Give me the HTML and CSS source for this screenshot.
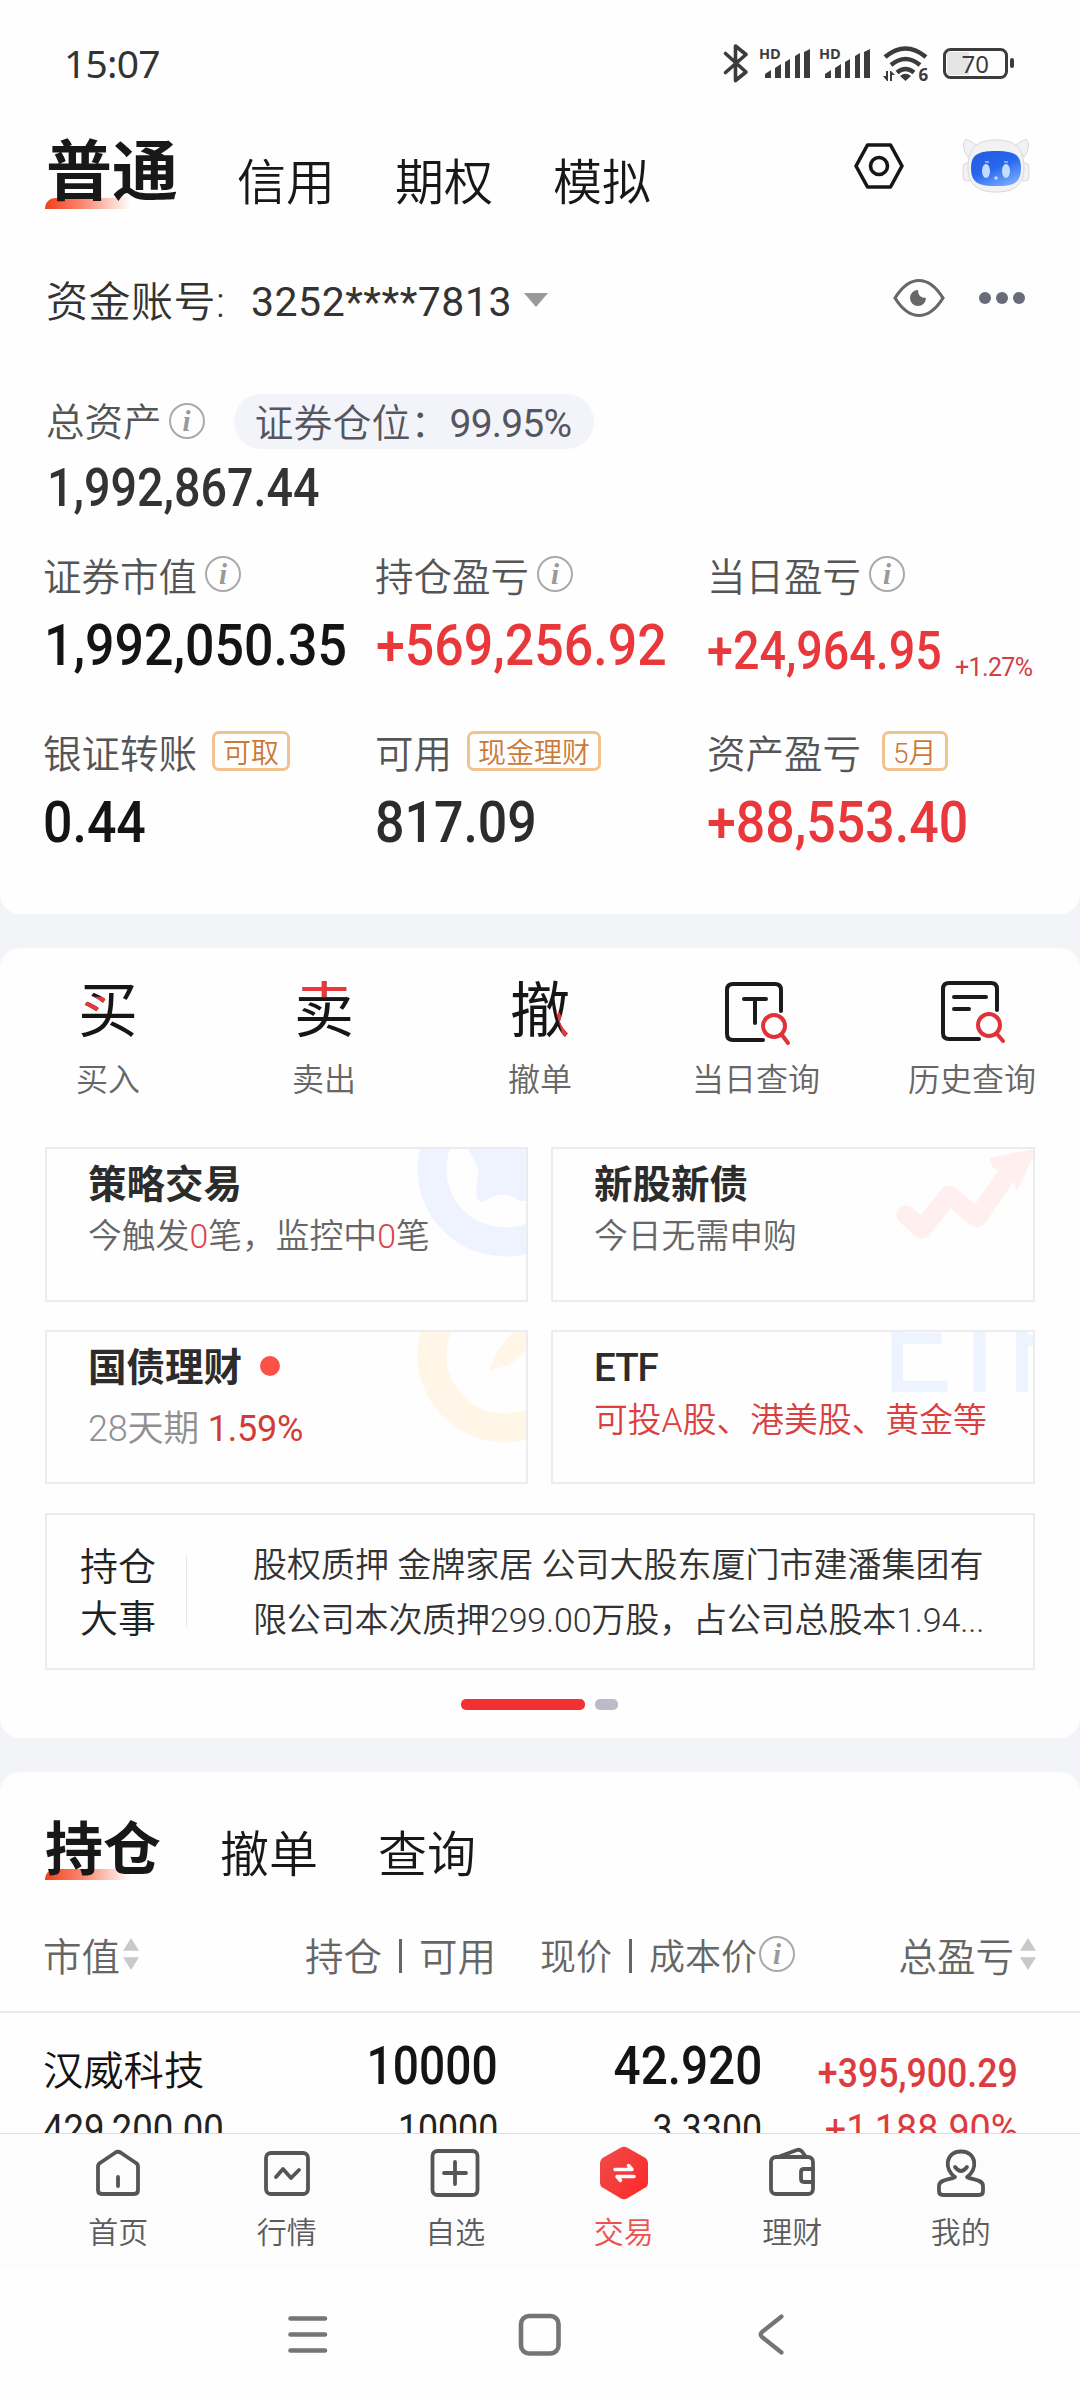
FILE: index.html
```html
<!DOCTYPE html>
<html lang="zh-CN">
<head>
<meta charset="utf-8">
<title>交易</title>
<link rel="stylesheet" href="styles.css">
</head>
<body>
<div class="phone">
  <section class="panel account">
    <header class="status">
      <span class="clock">15:07</span>
      <svg class="status-icons" width="300" height="44" viewBox="720 42 300 44" fill="none" stroke="#3c3c3c">
        <path d="M725.500 53.500L746 72L735.500 80.500V46L746 54.500L725.500 72.500" stroke-width="3.600" stroke-linejoin="round" stroke-linecap="round"/>
        <g fill="#3c3c3c" stroke="none">
          <text x="759" y="58.500" class="hd">HD</text>
          <path d="M765 78v-4l6-4v8zM775 78v-10l6-4v14zM785 78v-16l5-3v19zM795 78v-22l5-3v25zM804 78v-26l6-3v29z"/>
          <text x="819" y="58.500" class="hd">HD</text>
          <path d="M825 78v-4l6-4v8zM835 78v-10l6-4v14zM845 78v-16l5-3v19zM855 78v-22l5-3v25zM864 78v-26l6-3v29z"/>
          <path d="M900 76q5.500-4.500 11 0l-5.500 5zM883 76h3v-5h2v10h-1zM890 81v-10h1l4 4h-3v6z"/>
          <text x="918.500" y="81" class="six">6</text>
          <rect x="947" y="52" width="22" height="23" fill="#e4e4e4"/>
          <text x="961.500" y="73" class="battery">70</text>
          <rect x="1010" y="58" width="4" height="10" rx="2"/>
        </g>
        <path d="M885 57Q905.500 40 926 57M891 65Q905.500 53 920 65M897 72.500Q905.500 65.500 914 72.500" stroke-width="4.500"/>
        <rect x="944.500" y="49.500" width="62" height="28" rx="6" stroke-width="3"/>
      </svg>
    </header>
    <nav class="tabs main-tabs">
      <span class="tab active">普通</span><span class="tab">信用</span><span class="tab">期权</span><span class="tab">模拟</span>
      <svg class="hex" width="50" height="48" viewBox="0 0 50 48" fill="none" stroke="#161616" stroke-width="3.600" stroke-linejoin="round"><path d="M13.500 3H36.500L48 24L36.500 45H13.500L2 24Z"/><circle cx="25" cy="24" r="8.500"/></svg>
      <svg class="robot" width="72" height="58" viewBox="0 0 72 58">
        <defs>
          <linearGradient id="face" x1="0" y1="0" x2=".6" y2="1"><stop offset="0" stop-color="#245bdd"/><stop offset=".55" stop-color="#2767ee"/><stop offset="1" stop-color="#6fa2fb"/></linearGradient>
        </defs>
        <g fill="#f2f2f5" stroke="#d8d8de" stroke-width="1"><path d="M8 20Q0 9 6 2Q10 4 18 9ZM64 20Q72 9 66 2Q62 4 54 9Z"/><rect x="3" y="26" width="9" height="18" rx="4"/><rect x="60" y="26" width="9" height="18" rx="4"/><path d="M36 3C54 3 64 10 64 31C64 49 53 55 36 55C19 55 8 49 8 31C8 10 18 3 36 3Z"/></g>
        <path d="M36 14C53 14 61 17 61 31C61 47 52 49 36 49C20 49 11 47 11 31C11 17 19 14 36 14Z" fill="url(#face)"/>
        <g fill="#c3dcff"><ellipse cx="26" cy="34" rx="4" ry="7"/><ellipse cx="46" cy="34" rx="4" ry="7"/><circle cx="36" cy="41" r="1.700"/></g>
        <path d="M25 25h4M44 25h4" stroke="#7fabff" stroke-width="2"/>
      </svg>
    </nav>
    <div class="account-row">
      <span class="account-label">资金账号:</span><span class="account-no">3252****7813</span><i class="caret"></i>
      <svg class="eye" width="52" height="40" viewBox="0 0 52 40"><path d="M2 20Q13 2.500 26 2.500T50 20Q39 37.500 26 37.500T2 20Z" fill="none" stroke="#686868" stroke-width="3.200"/><path d="M25 12A8 8 0 1 0 33 20Q25 20 25 12Z" fill="#686868"/></svg>
      <span class="dots"><i></i><i></i><i></i></span>
    </div>
    <div class="total-row"><span class="label">总资产</span><i class="info">i</i><span class="pill"><span class="pos">证券仓位：</span><span class="pct">99.95%</span></span></div>
    <div class="total-value"><span class="num total">1,992,867.44</span></div>
    <div class="grid3 labels first"><div>证券市值<i class="info">i</i></div><div>持仓盈亏<i class="info">i</i></div><div>当日盈亏<i class="info">i</i></div></div>
    <div class="grid3 values"><div><span class="num big">1,992,050.35</span></div><div><span class="num big red">+569,256.92</span></div><div><span class="num day red">+24,964.95</span><span class="rate">+1.27%</span></div></div>
    <div class="grid3 labels second"><div>银证转账<b class="tag">可取</b></div><div>可用<b class="tag">现金理财</b></div><div>资产盈亏<b class="tag month">5月</b></div></div>
    <div class="grid3 values"><div><span class="num big">0.44</span></div><div><span class="num big soft">817.09</span></div><div><span class="num big red">+88,553.40</span></div></div>
  </section>

  <section class="panel tools">
    <div class="quick">
      <div><span class="glyph buy" data-char="买">买</span><span>买入</span></div>
      <div><span class="glyph sell" data-char="卖">卖</span><span>卖出</span></div>
      <div><span class="glyph cancel" data-char="撤">撤</span><span>撤单</span></div>
      <div><svg width="68" height="66" viewBox="0 0 68 66" fill="none" stroke="#1b1b1b" stroke-width="4" stroke-linecap="round" stroke-linejoin="round"><path d="M41 60H11Q5 60 5 54V10Q5 4 11 4H53Q59 4 59 10V31M22 19H44M33 19V43"/><g stroke="#dd3339"><circle cx="52" cy="46" r="11"/><path d="M60 55L66 63"/></g></svg><span>当日查询</span></div>
      <div><svg width="68" height="66" viewBox="0 0 68 66" fill="none" stroke="#1b1b1b" stroke-width="4" stroke-linecap="round" stroke-linejoin="round"><path d="M41 59H11Q5 59 5 53V9Q5 3 11 3H53Q59 3 59 9V30M16 17H48M16 29H31"/><g stroke="#dd3339"><circle cx="51" cy="45" r="11"/><path d="M59 54L65 61"/></g></svg><span>历史查询</span></div>
    </div>
    <div class="cards">
      <article>
        <svg class="art" width="110" height="153" viewBox="418 1148 110 153"><circle cx="507" cy="1168" r="73" fill="none" stroke="#eff2ff" stroke-width="29"/><path d="M470 1148L481 1169Q477 1184 479 1197Q483 1204 490 1198Q507 1188 522 1200L528 1200V1148Z" fill="#eff2ff"/></svg>
        <h3>策略交易</h3><p>今触发<em>0</em>笔，监控中<em>0</em>笔</p>
      </article>
      <article>
        <svg class="art" width="140" height="153" viewBox="894 1148 140 153" fill="#ffefef"><path d="M907 1214L923 1228L950 1194L978 1217L1016 1162" fill="none" stroke="#ffefef" stroke-width="19" stroke-linejoin="round" stroke-linecap="round"/><path d="M990 1157L1034 1148V1156L1018 1190L1012 1173L994 1167Z"/></svg>
        <h3>新股新债</h3><p>今日无需申购</p>
      </article>
      <article class="bond">
        <svg class="art" width="110" height="152" viewBox="418 1331 110 152"><circle cx="507" cy="1354" r="73" fill="none" stroke="#fff6e8" stroke-width="29"/><path d="M528 1331H515L499 1350L491 1370L511 1364L528 1350Z" fill="#fff6e8"/></svg>
        <h3>国债理财<i class="dot"></i></h3><p>28天期 <em>1.59%</em></p>
      </article>
      <article class="etf">
        <span class="art etf-mark">ETF</span>
        <h3>ETF</h3><p>可投A股、港美股、黄金等</p>
      </article>
    </div>
    <div class="news"><div class="news-title">持仓<br>大事</div><div class="news-text">股权质押 金牌家居 公司大股东厦门市建潘集团有<br><span class="line2">限公司本次质押299.00万股，占公司总股本1.94...</span></div></div>
    <div class="pager"><i></i><i></i></div>
  </section>

  <section class="panel holdings">
    <nav class="tabs hold-tabs"><span class="tab active">持仓</span><span class="tab">撤单</span><span class="tab">查询</span></nav>
    <div class="table-head">
      <div>市值<i class="sorter"></i></div>
      <div class="right">持仓<s></s>可用</div>
      <div class="cost">现价<s></s>成本价<i class="info">i</i></div>
      <div class="right last">总盈亏<i class="sorter"></i></div>
    </div>
    <div class="row row-main"><span class="name">汉威科技</span><span class="num r">10000</span><span class="num r price">42.920</span><span class="num r gain">+395,900.29</span></div>
    <div class="row row-sub"><span class="num">429,200.00</span><span class="num r">10000</span><span class="num r">3.3300</span><span class="num r gain">+1,188.90%</span></div>
  </section>

  <nav class="bottom">
    <div><svg width="56" height="56" viewBox="0 0 56 56"><path d="M8 22Q8 19 10 18L25.500 7.500Q28 6 30.500 7.500L46 18Q48 19 48 22V45Q48 49 44 49H12Q8 49 8 45ZM28 32V41"/></svg><span>首页</span></div>
    <div><svg width="56" height="56" viewBox="0 0 56 56"><rect x="7" y="8" width="42" height="41" rx="5"/><path d="M17 32L24 24L32 33L40 25"/></svg><span>行情</span></div>
    <div><svg width="56" height="56" viewBox="0 0 56 56"><rect x="5.500" y="6" width="45" height="44" rx="5"/><path d="M17 28H39M28 17V39"/></svg><span>自选</span></div>
    <div class="current"><svg width="56" height="56" viewBox="0 0 56 56"><defs><linearGradient id="hexfill" x1="0" y1="0" x2="1" y2=".7"><stop offset="0" stop-color="#ed4d4b"/><stop offset="1" stop-color="#fb2c2c"/></linearGradient></defs><path d="M25 2.500Q28 1 31 2.500L49.500 13Q52 15 52 18V38Q52 41 49.500 42.500L31 53.500Q28 55 25 53.500L6.500 42.500Q4 41 4 38V18Q4 15 6.500 13Z" fill="url(#hexfill)" stroke="none"/><path d="M19 24.500H36L32.500 20.500M38 31.500H21L24.500 35.500" stroke="#fff" stroke-width="3.500"/></svg><span>交易</span></div>
    <div><svg width="56" height="56" viewBox="0 0 56 56"><rect x="7" y="12" width="42" height="37" rx="5"/><path d="M49 24H40Q37 24 37 27V34Q37 37 40 37H49M14 12L33 5Q36 4 38 6.500L42 12"/></svg><span>理财</span></div>
    <div><svg width="56" height="56" viewBox="0 0 56 56"><path d="M22 32C11 25 12 6.500 28 6.500S45 25 34 32C39 35 50 34 50 41V46Q50 50 46 50H10Q6 50 6 46V41C6 34 17 35 22 32M22 22Q28 30 34 22"/></svg><span>我的</span></div>
  </nav>
  <footer class="system">
    <svg width="500" height="46" viewBox="286 2310 500 46" fill="none" stroke="#757575" stroke-linecap="round" stroke-linejoin="round"><path d="M290.500 2317.500H325M290.500 2333.500H325M290.500 2349.500H325" stroke-width="4.600"/><rect x="521" y="2315" width="37.500" height="37.500" rx="8" stroke-width="4.600"/><path d="M781.500 2315.500L762 2331Q759.500 2333.500 762 2336L781.500 2351.500" stroke-width="4.200"/></svg>
  </footer>
</div>
</body>
</html>
```
FILE: styles.css
```css
* { box-sizing: border-box; }
body { margin: 0; background: #f2f4f8; font-family: Roboto, "Noto Sans CJK SC", sans-serif; font-weight: 350; color: #1a1a1a; }
i, em { font-style: normal; }
.phone { width: 1080px; height: 2400px; display: flex; flex-direction: column; overflow: hidden; }
.panel { background: #fefefe; border-radius: 20px; overflow: hidden; flex: none; }
.account { height: 914px; border-radius: 0 0 20px 20px; }
.tools { height: 790px; margin-top: 34px; padding-top: 32px; }
.holdings { height: 361px; margin-top: 34px; border-radius: 20px 20px 0 0; }

/* status bar */
.status { height: 127px; padding: 0 60px 0 64px; display: flex; align-items: center; justify-content: space-between; }
.clock { font: 400 39px/48px "Noto Sans", Roboto, sans-serif; color: #333; letter-spacing: -.8px; margin-top: -2px; }
.hd { font: 700 14.500px "Open Sans", sans-serif; }
.six { font: 700 17px "Open Sans", sans-serif; }
.battery { font: 400 24px "Noto Sans", sans-serif; }

/* tab strips */
.tabs { display: flex; align-items: center; padding-left: 45px; position: relative; z-index: 0; }
.tab { font-size: 49px; line-height: 60px; margin-right: 60px; color: #181818; }
.tab.active { position: relative; font-weight: 700; }
.tab.active::before { content: ""; position: absolute; z-index: -1; left: 0; bottom: 2px; width: 86px; height: 11px; border-radius: 10px 0 0 0; background: linear-gradient(90deg, #f33f1b, #fa8a72 45%, #fff 100%); }
.main-tabs { height: 86px; }
.main-tabs .tab { margin-top: 28px; }
.main-tabs .active { font-size: 66px; line-height: 76px; margin-top: 5px; padding-left: 1px; margin-right: 59px; }
.hex { margin: -9px 0 0 auto; }
.robot { margin: -9px 48px 0 56px; }
.hold-tabs { height: 152px; }
.hold-tabs .tab { margin-top: 15px; }
.hold-tabs .active { font-size: 58px; line-height: 64px; margin-top: 3px; margin-right: 59px; }

/* account */
.account-row { height: 174px; padding: 0 55px 0 46px; display: flex; align-items: center; color: #333; }
.account-label { width: 205px; font-size: 42px; letter-spacing: .5px; margin-top: -4px; }
.account-no { font-size: 41px; font-weight: 400; letter-spacing: .5px; margin-top: 4px; }
.caret { border: 12px solid transparent; border-top: 14px solid #999; border-bottom: 0; margin-left: 12px; }
.eye { margin-left: auto; margin-top: -4px; }
.dots { display: flex; gap: 5px; margin: -4px 0 0 34px; }
.dots i { width: 12px; height: 12px; border-radius: 50%; background: #686b78; }
.label, .labels { font-size: 38.500px; color: #555; }
.label { margin-top: -4px; }
.info { width: 36px; height: 36px; border: 2px solid #aaa; border-radius: 50%; margin-left: 7px; display: inline-flex; align-items: center; justify-content: center; font: italic 700 29px/30px "Liberation Serif", serif; color: #999; flex: none; }
.total-row { height: 68px; padding-left: 46px; display: flex; align-items: center; }
.pill { margin-left: 29px; height: 55px; width: 360px; padding-left: 21px; border-radius: 28px; background: #f3f4f9; display: flex; align-items: center; font-size: 39px; color: #555660; }
.pos { margin-top: -2px; }
.pct { font-weight: 400; letter-spacing: -.8px; margin-top: 5px; }
.total-value { height: 62px; padding: 3px 0 0 47px; display: flex; align-items: center; }
.grid3 { display: grid; grid-template-columns: 332px 332px 1fr; padding-left: 43px; }
.grid3 > div { display: flex; align-items: center; }
.labels { height: 46px; }
.first { margin-top: 29px; }
.first .info { margin-left: 8px; }
.second { margin-top: 32px; }
.values { height: 91px; margin-top: 8px; }
.num { display: inline-block; transform: scaleX(.91); transform-origin: left; white-space: nowrap; }
.total { font-size: 53px; font-weight: 500; color: #333; transform: scaleX(.88); }
.big { font-size: 57px; font-weight: 500; color: #141414; }
.first + .values .big { margin-left: 1px; }
.soft { color: #2c2c2c; }
.day { font-size: 53px; font-weight: 500; transform: scaleX(.88); margin: 10px -25px 0 0; }
.num.red { color: #e8383b; }
.rate { font-size: 25px; font-weight: 400; color: #d24045; margin: 43px 0 0 6px; letter-spacing: -.6px; }
.tag { height: 40px; margin-left: 15px; padding: 0 8px; border: 3px solid #efc48e; border-radius: 7px; display: flex; align-items: center; font-size: 28px; font-weight: 350; color: #cc7836; }
.month { margin-left: 21px; }

/* shortcuts */
.quick { display: grid; grid-template-columns: repeat(5, 216px); }
.quick > div { display: flex; flex-direction: column; align-items: center; font-size: 32px; line-height: 46px; color: #666; }
.quick svg { margin: 0 0 11px; overflow: visible; }
.glyph { position: relative; font-size: 60px; line-height: 64px; font-weight: 400; margin-bottom: 13px; color: #161616; }
.glyph::after { content: attr(data-char); position: absolute; left: 0; top: 0; color: #e8383b; }
.buy::after { clip-path: polygon(0 26%, 45% 26%, 47% 50%, 0 50%); }
.sell::after { clip-path: inset(0 0 73% 0); }
.cancel::after { clip-path: polygon(76% 48%, 81% 48%, 100% 84%, 100% 100%, 92% 100%); }

/* feature cards */
.cards { display: grid; grid-template-columns: 483px 484px; grid-template-rows: 155px 154px; gap: 28px 23px; margin: 44px 0 0 45px; }
.cards article { position: relative; z-index: 0; overflow: hidden; border: 2px solid #ececee; padding: 13px 0 0 41px; }
.art { position: absolute; z-index: -1; right: 0; top: 0; }
.cards h3 { margin: 0 0 6px; font-size: 38.500px; line-height: 46px; font-weight: 600; color: #2c2c2c; display: flex; align-items: center; }
.cards p { margin: 0; font-size: 33.800px; line-height: 46px; color: #666; }
.cards em { color: #dd4449; }
.dot { width: 20px; height: 20px; border-radius: 50%; background: #fb5147; margin: -4px 0 0 18px; }
.cards .bond { padding-top: 13px; }
.bond h3 { margin-bottom: 15px; }
.bond p { font-size: 36px; color: #909090; letter-spacing: -.2px; }
.bond em { color: #d03d38; font-weight: 400; }
.etf h3 { font-weight: 500; letter-spacing: -1px; }
.etf p { color: #d9403f; margin-top: 7px; }
.etf-mark { left: 328px; right: auto; top: -42px; font-size: 147px; line-height: 105px; font-weight: 400; color: #edf4ff; letter-spacing: -13px; transform: scaleX(.85); transform-origin: left; }

.news { width: 990px; height: 157px; margin: 29px 0 0 45px; border: 2px solid #ececee; display: flex; }
.news-title { margin: 26px 0 0 33px; font-size: 38px; line-height: 52px; width: 106px; height: 104px; color: #222; }
.news-text { margin: 23px 0 0; padding-left: 67px; font-size: 34px; line-height: 55px; white-space: nowrap; color: #333; position: relative; }
.news-text::before { content: ""; position: absolute; left: 0; top: 17px; width: 1px; height: 72px; background: #e8e8ea; }
.line2 { letter-spacing: -.15px; }
.pager { margin: 29px 0 0 461px; display: flex; gap: 10px; }
.pager i { width: 124px; height: 11px; border-radius: 5px; background: #f23232; }
.pager i + i { width: 23px; background: #bcbcc8; }

/* positions table */
.table-head { height: 89px; padding: 0 44px 27px 43px; border-bottom: 2px solid #ebebed; display: grid; grid-template-columns: 240px 213px 299px 1fr; font-size: 38.500px; color: #666; }
.table-head > div { display: flex; align-items: center; }
.table-head .right { justify-content: flex-end; }
.table-head .cost { font-size: 36px; justify-content: flex-end; }
.table-head .info { margin-left: 2px; }
.table-head s { width: 3px; height: 34px; background: #666; margin: 4px 17px 0; }
.sorter { width: 16px; height: 32px; margin: 0 0 0 3px; background: #c9c9c9; clip-path: polygon(50% 0, 100% 40%, 0 40%, 0 60%, 100% 60%, 50% 100%, 0 60%, 0 40%); }
.last .sorter { margin: 0 0 0 6px; }
.row { display: grid; grid-template-columns: 240px 215px 264px 256px; padding-left: 43px; align-items: center; }
.r { justify-self: end; transform-origin: right; transform: scaleX(.87); }
.row-main { height: 96px; font-size: 53px; font-weight: 500; color: #141414; padding-top: 9px; }
.row-main .name { font-size: 40.300px; font-weight: 350; padding-top: 4px; }
.row-main .gain { font-size: 41px; padding-top: 14px; }
.row-main .price { transform: scaleX(.9); }
.row .gain { color: #dc3c40; }
.row-sub { height: 40px; font-size: 41px; font-weight: 400; line-height: 40px; color: #222; }
.row-sub .num:first-child { transform: scaleX(.89); }
.row-sub .gain { transform: scaleX(.92); }

/* bottom bars */
.bottom { height: 134px; background: #fcfcfc; border-top: 1px solid #dfdfe1; padding: 11px 35px 0 34px; display: grid; grid-template-columns: repeat(6, 1fr); flex: none; }
.bottom > div { display: flex; flex-direction: column; align-items: center; font-size: 30px; line-height: 40px; color: #5c5c5c; }
.bottom svg { margin-bottom: 12px; fill: none; stroke: #555; stroke-width: 3.800; stroke-linecap: round; stroke-linejoin: round; }
.bottom .current { color: #ec5350; }
.system { height: 133px; flex: none; background: #fefefe; display: flex; align-items: center; padding-left: 286px; }
```
